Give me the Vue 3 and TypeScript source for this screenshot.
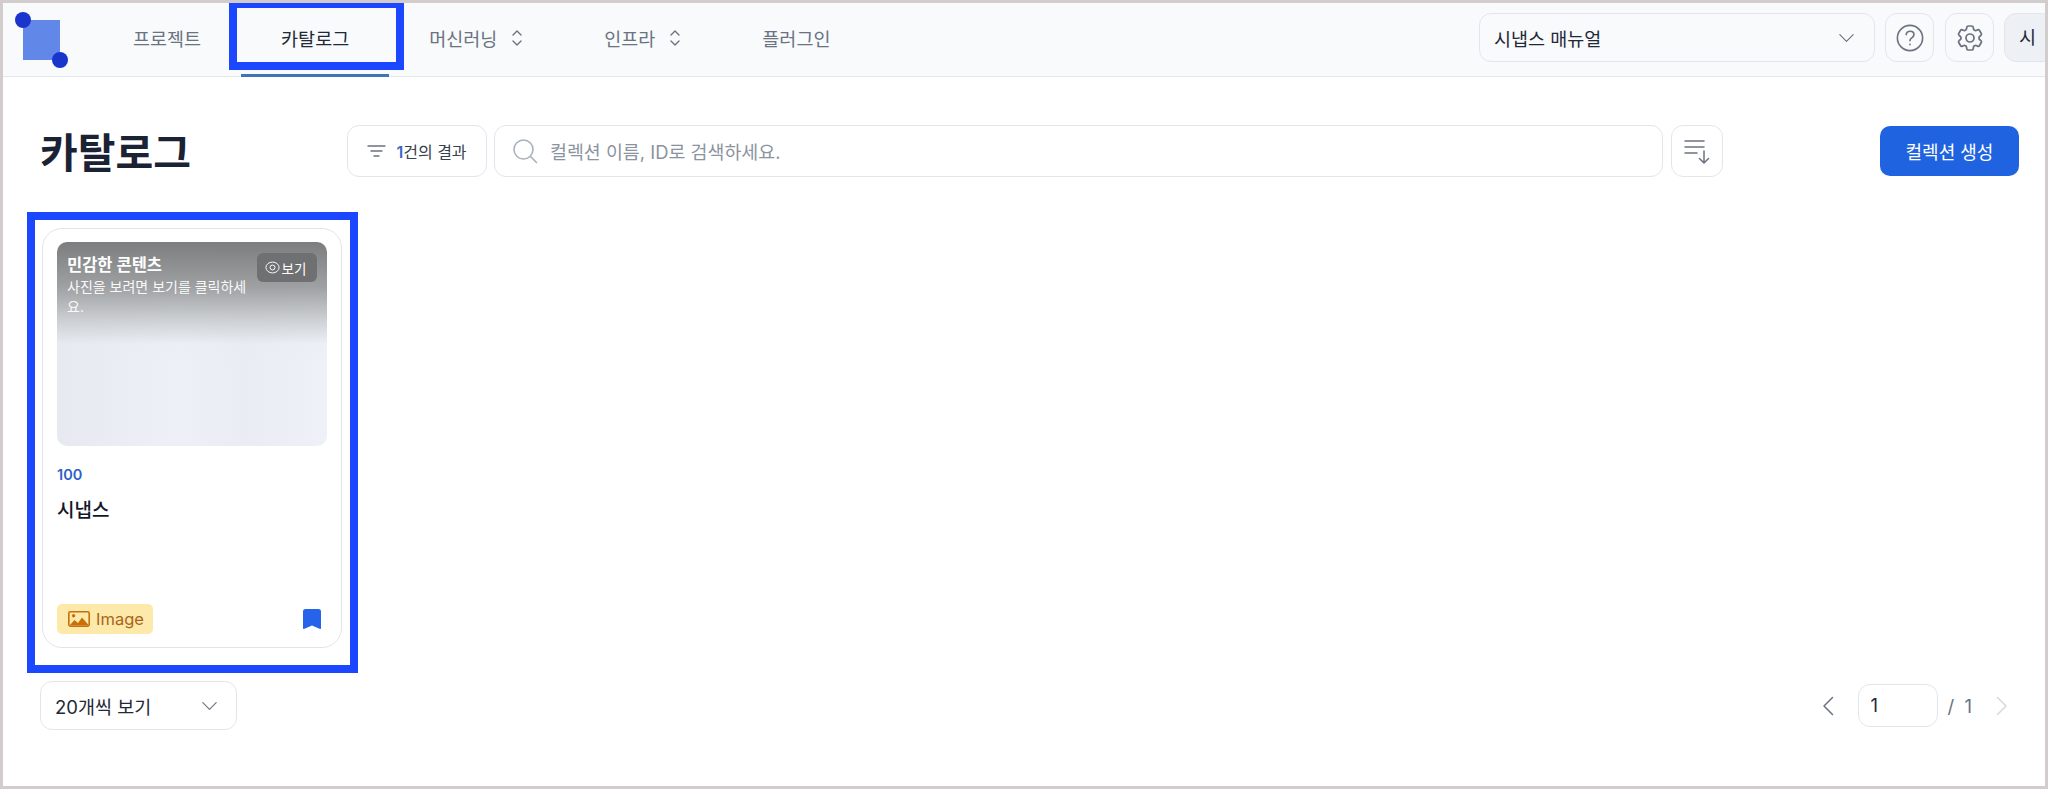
<script setup lang="ts">
interface NavItem {
  label: string;
  active?: boolean;
  menu?: boolean;
}

const navItems: NavItem[] = [
  { label: '프로젝트' },
  { label: '카탈로그', active: true },
  { label: '머신러닝', menu: true },
  { label: '인프라', menu: true },
  { label: '플러그인' },
];
</script>

<template>
  <div class="page">
    <header class="topbar">
      <div class="logo">
        <span class="logo-square"></span>
        <span class="logo-dot logo-dot--tl"></span>
        <span class="logo-dot logo-dot--br"></span>
      </div>
      <nav class="nav">
        <a
          v-for="item in navItems"
          :key="item.label"
          class="nav-item"
          :class="{ 'nav-item--active': item.active, 'nav-item--menu': item.menu }"
        >
          {{ item.label }}
          <svg v-if="item.menu" class="updown" viewBox="0 0 12 20" fill="none" stroke="currentColor" stroke-width="1.4" stroke-linecap="round" stroke-linejoin="round">
            <path d="M2 7l4-4 4 4M2 13l4 4 4-4" />
          </svg>
        </a>
      </nav>
      <div class="topbar-right">
        <div class="manual-select">
          <span>시냅스 매뉴얼</span>
          <svg class="chevron" viewBox="0 0 20 12" fill="none" stroke="currentColor" stroke-width="1.4" stroke-linecap="round" stroke-linejoin="round">
            <path d="M2 2l8 8 8-8" />
          </svg>
        </div>
        <button class="icon-btn">
          <svg width="30" height="30" viewBox="0 0 30 30" fill="none" stroke="#6b7280" stroke-width="1.6" stroke-linecap="round">
            <circle cx="15" cy="15" r="12.6" />
            <path d="M11.2 11.6c.3-2.2 2-3.4 3.900-3.400 2.200 0 3.900 1.400 3.900 3.400 0 1.700-1 2.500-2.200 3.300-1.100.7-1.800 1.400-1.800 2.800" />
            <path d="M15 21.4v.3" />
          </svg>
        </button>
        <button class="icon-btn icon-btn--gear">
          <svg width="32" height="32" viewBox="0 0 24 24" fill="none" stroke="#6b7280" stroke-width="1.3" stroke-linecap="round" stroke-linejoin="round">
            <path d="M9.594 3.94c.09-.542.56-.94 1.11-.94h2.593c.55 0 1.02.398 1.11.94l.213 1.281c.063.374.313.686.645.87.074.04.147.083.22.127.325.196.72.257 1.075.124l1.217-.456a1.125 1.125 0 0 1 1.37.49l1.296 2.247a1.125 1.125 0 0 1-.26 1.431l-1.003.827c-.293.241-.438.613-.43.992a7.723 7.723 0 0 1 0 .255c-.008.378.137.75.43.991l1.004.827c.424.35.534.955.26 1.43l-1.298 2.247a1.125 1.125 0 0 1-1.369.491l-1.217-.456c-.355-.133-.75-.072-1.076.124a6.47 6.47 0 0 1-.22.128c-.331.183-.581.495-.644.869l-.213 1.281c-.09.543-.56.94-1.11.94h-2.594c-.55 0-1.019-.398-1.11-.94l-.213-1.281c-.062-.374-.312-.686-.644-.87a6.52 6.52 0 0 1-.22-.127c-.325-.196-.72-.257-1.076-.124l-1.217.456a1.125 1.125 0 0 1-1.369-.49l-1.297-2.247a1.125 1.125 0 0 1 .26-1.431l1.004-.827c.292-.24.437-.613.43-.991a6.932 6.932 0 0 1 0-.255c.007-.38-.138-.751-.43-.992l-1.004-.827a1.125 1.125 0 0 1-.26-1.43l1.297-2.247a1.125 1.125 0 0 1 1.37-.491l1.216.456c.356.133.751.072 1.076-.124.072-.044.146-.086.22-.128.332-.183.582-.495.644-.869l.214-1.28Z" />
            <circle cx="12" cy="12" r="3" />
          </svg>
        </button>
        <div class="avatar">시</div>
      </div>
    </header>

    <main class="content">
      <div class="toolbar">
        <h1 class="title">카탈로그</h1>
        <button class="filter-btn">
          <svg width="19" height="14" viewBox="0 0 19 14" fill="none" stroke="#6b7280" stroke-width="1.4" stroke-linecap="round">
            <path d="M1 2h17M4 7h11M7 12h5" />
          </svg>
          <span><b class="count">1</b>건의 결과</span>
        </button>
        <div class="search">
          <svg width="26" height="26" viewBox="0 0 26 26" fill="none" stroke="#a9b1bd" stroke-width="1.6" stroke-linecap="round">
            <circle cx="11.5" cy="11.500" r="9.500" />
            <path d="M18.500 18.500l6 6" />
          </svg>
          <span class="placeholder">컬렉션 이름, ID로 검색하세요.</span>
        </div>
        <button class="sort-btn">
          <svg width="26" height="26" viewBox="0 0 26 26" fill="none" stroke="#6b7280" stroke-width="1.5" stroke-linecap="round" stroke-linejoin="round">
            <path d="M1 3h19M1 9h19M1 15h12M20 13v12M15.500 20.500l4.500 4.500 4.500-4.500" />
          </svg>
        </button>
        <button class="create-btn">컬렉션 생성</button>
      </div>

      <section class="grid">
        <article class="card">
          <div class="thumb">
            <div class="thumb-text">
              <strong>민감한 콘텐츠</strong>
              <p>사진을 보려면 보기를 클릭하세요.</p>
            </div>
            <button class="reveal-btn">
              <svg width="15" height="15" viewBox="0 0 16 16" fill="none" stroke="#fff" stroke-width="1">
                <ellipse cx="8" cy="8" rx="7" ry="5.800" />
                <circle cx="8" cy="8" r="2.600" />
              </svg>
              보기
            </button>
          </div>
          <div class="card-id">100</div>
          <div class="card-name">시냅스</div>
          <div class="card-footer">
            <span class="tag">
              <svg width="22" height="16" viewBox="0 0 22 16">
                <rect x="0.800" y="0.800" width="20.400" height="14.400" rx="1.600" fill="none" stroke="#c96f0a" stroke-width="1.600" />
                <circle cx="5.600" cy="4.800" r="1.700" fill="#c96f0a" />
                <path d="M1.500 14.500l5-5.500 3.500 3 4-5.500 7 8z" fill="#c96f0a" />
              </svg>
              Image
            </span>
            <svg class="bookmark" width="18" height="20" viewBox="0 0 18 20">
              <path d="M2.500 0h13A2.500 2.500 0 0 1 18 2.500V19c0 .8-.8 1.200-1.500.8L9 16.400l-7.500 3.400C.8 20.200 0 19.800 0 19V2.500A2.500 2.500 0 0 1 2.500 0z" fill="#2563eb" />
            </svg>
          </div>
        </article>
      </section>

      <div class="bottom">
        <div class="page-size">
          <span>20개씩 보기</span>
          <svg class="chevron" viewBox="0 0 20 12" fill="none" stroke="currentColor" stroke-width="1.4" stroke-linecap="round" stroke-linejoin="round">
            <path d="M2 2l8 8 8-8" />
          </svg>
        </div>
        <div class="pager">
          <svg width="12" height="20" viewBox="0 0 12 20" fill="none" stroke="#6b7280" stroke-width="1.5" stroke-linecap="round" stroke-linejoin="round">
            <path d="M10.500 1.500L2 10l8.500 8.500" />
          </svg>
          <div class="page-input">1</div>
          <span class="page-total">/ &nbsp;1</span>
          <svg width="12" height="20" viewBox="0 0 12 20" fill="none" stroke="#d5d9df" stroke-width="1.5" stroke-linecap="round" stroke-linejoin="round">
            <path d="M1.500 1.500L10 10l-8.500 8.500" />
          </svg>
        </div>
      </div>
    </main>

    <!-- annotation boxes drawn over the screen -->
    <div class="mark mark--nav"></div>
    <div class="mark mark--card"></div>
  </div>
</template>

<style>
html,
body {
  margin: 0;
  background: #fff;
}
</style>

<style scoped>
.page {
  position: relative;
  box-sizing: border-box;
  width: 2048px;
  height: 789px;
  overflow: hidden;
  border: 3px solid #d2cccc;
  background: #fff;
  color: #1f2937;
  font-family: Inter, 'Noto Sans CJK KR', sans-serif;
}
button {
  font-family: inherit;
  cursor: pointer;
}

.topbar {
  display: flex;
  align-items: center;
  box-sizing: border-box;
  height: 74px;
  border-bottom: 1px solid #e2e8f0;
  background: #f8fafc;
}
.logo {
  position: relative;
  flex: none;
  width: 90px;
  height: 74px;
}
.logo-square {
  position: absolute;
  left: 20px;
  top: 17px;
  width: 37px;
  height: 40px;
  background: #6188e8;
}
.logo-dot {
  position: absolute;
  width: 16px;
  height: 16px;
  border-radius: 50%;
  background: #1a35cc;
}
.logo-dot--tl {
  left: 12px;
  top: 9px;
}
.logo-dot--br {
  left: 49px;
  top: 49px;
}

.nav {
  display: flex;
  align-self: stretch;
}
.nav-item {
  display: flex;
  align-items: center;
  gap: 14px;
  box-sizing: border-box;
  height: 74px;
  padding: 0 40px 2px;
  border-bottom: 3px solid transparent;
  font-size: 18.5px;
  color: #6b7280;
}
.nav-item--menu {
  padding-right: 41px;
}
.nav-item--active {
  border-bottom-color: #3f74b5;
  color: #1f2937;
}
.updown {
  width: 12px;
  height: 20px;
}

.topbar-right {
  display: flex;
  align-items: center;
  gap: 10px;
  margin-left: auto;
  padding-bottom: 4px;
}
.manual-select {
  display: flex;
  align-items: center;
  justify-content: space-between;
  box-sizing: border-box;
  width: 396px;
  height: 49px;
  padding: 0 19px 0 14px;
  border: 1px solid #e2e6ec;
  border-radius: 12px;
  font-size: 18.5px;
  color: #1f2937;
}
.chevron {
  width: 17px;
  height: 10px;
  color: #6b7280;
}
.icon-btn {
  display: flex;
  align-items: center;
  justify-content: center;
  box-sizing: border-box;
  width: 49px;
  height: 49px;
  padding: 0;
  border: 1px solid #e2e6ec;
  border-radius: 12px;
  background: transparent;
}
.icon-btn--gear {
  margin-left: 1px;
}
.avatar {
  box-sizing: border-box;
  width: 50px;
  height: 49px;
  margin-right: -9px;
  padding-left: 14px;
  border: 1px solid #e2e6ec;
  border-radius: 12px;
  background: #edf1f5;
  font-size: 18.5px;
  line-height: 47px;
  color: #1f2937;
}

.content {
  padding: 48px 26px 0 37px;
}
.toolbar {
  display: flex;
  align-items: center;
  height: 52px;
}
.title {
  flex: none;
  width: 307px;
  margin: -2px 0 0;
  font-size: 41px;
  font-weight: 700;
  color: #1a2233;
}
.filter-btn {
  display: flex;
  align-items: center;
  justify-content: center;
  gap: 10px;
  box-sizing: border-box;
  width: 140px;
  height: 52px;
  padding: 0;
  border: 1px solid #e2e6ec;
  border-radius: 12px;
  background: #fff;
  font-size: 16px;
  color: #374151;
}
.count {
  font-weight: 600;
  color: #3568c9;
}
.search {
  display: flex;
  flex: 1;
  align-items: center;
  gap: 12px;
  box-sizing: border-box;
  height: 52px;
  margin: 0 8px 0 7px;
  padding-left: 17px;
  border: 1px solid #e2e6ec;
  border-radius: 12px;
}
.placeholder {
  font-size: 18.4px;
  color: #8b93a0;
}
.sort-btn {
  display: flex;
  align-items: center;
  justify-content: center;
  box-sizing: border-box;
  width: 52px;
  height: 52px;
  margin-right: 157px;
  padding: 0;
  border: 1px solid #e2e6ec;
  border-radius: 12px;
  background: #fff;
}
.create-btn {
  box-sizing: border-box;
  width: 139px;
  height: 50px;
  padding: 0;
  border: 0;
  border-radius: 10px;
  background: #1f63e0;
  font-size: 18px;
  color: #fff;
}

.grid {
  margin: 51px 0 33px 2px;
}
.card {
  display: flex;
  flex-direction: column;
  box-sizing: border-box;
  width: 300px;
  height: 420px;
  padding: 13px 14px;
  border: 1px solid #e2e4e8;
  border-radius: 20px;
}
.thumb {
  display: flex;
  flex: none;
  align-items: flex-start;
  justify-content: space-between;
  box-sizing: border-box;
  height: 204px;
  padding: 11px 10px 0;
  border-radius: 10px;
  background:
    linear-gradient(180deg, #7c7d7e 0%, rgba(154, 156, 158, 0.95) 22%, rgba(196, 199, 202, 0.8) 38%, rgba(232, 235, 240, 0.3) 50%, rgba(238, 241, 247, 0) 60%),
    linear-gradient(90deg, #e6e9ef 0%, #edf0f6 45%, #e9ecf3 70%, #eef1f7 100%);
}
.thumb-text {
  width: 185px;
  color: #fff;
}
.thumb-text strong {
  display: block;
  font-size: 16.5px;
  font-weight: 700;
  line-height: 24px;
}
.thumb-text p {
  margin: 0;
  font-size: 14px;
  line-height: 20px;
  word-break: break-all;
  color: #f8f9fa;
}
.reveal-btn {
  display: flex;
  flex: none;
  align-items: center;
  justify-content: center;
  gap: 2px;
  width: 60px;
  height: 29px;
  padding: 0 3px 0 0;
  border: 0;
  border-radius: 6px;
  background: #6f7071;
  font-size: 13.5px;
  color: #fff;
}
.card-id {
  margin-top: 19px;
  font-size: 14.5px;
  font-weight: 600;
  line-height: 20px;
  color: #2f5fc8;
}
.card-name {
  margin-top: 12px;
  font-size: 19px;
  font-weight: 500;
  line-height: 28px;
  color: #111827;
}
.card-footer {
  display: flex;
  align-items: center;
  justify-content: space-between;
  margin-top: auto;
  padding-right: 6px;
}
.tag {
  display: flex;
  align-items: center;
  gap: 6px;
  box-sizing: border-box;
  width: 96px;
  height: 30px;
  padding-left: 11px;
  border-radius: 5px;
  background: #fde9a9;
  font-size: 16.5px;
  color: #a8651a;
}

.bottom {
  display: flex;
  align-items: center;
  justify-content: space-between;
  height: 49px;
}
.page-size {
  display: flex;
  align-items: center;
  justify-content: space-between;
  box-sizing: border-box;
  width: 197px;
  height: 49px;
  padding: 0 18px 0 14px;
  border: 1px solid #e2e6ec;
  border-radius: 12px;
  font-size: 18.5px;
  color: #1f2937;
}
.pager {
  display: flex;
  align-items: center;
  margin-right: 11px;
  font-size: 18.5px;
}
.page-input {
  box-sizing: border-box;
  width: 80px;
  height: 43px;
  margin-left: 24px;
  padding-left: 11px;
  border: 1px solid #e2e6ec;
  border-radius: 12px;
  line-height: 41px;
  color: #1f2937;
}
.page-total {
  margin: 0 24px 0 9px;
  color: #6b7280;
}

.mark {
  position: absolute;
  box-sizing: border-box;
  border: 8px solid #1a47ff;
  pointer-events: none;
}
.mark--nav {
  left: 226px;
  top: -3px;
  width: 175px;
  height: 70px;
}
.mark--card {
  left: 24px;
  top: 209px;
  width: 331px;
  height: 461px;
}
</style>
